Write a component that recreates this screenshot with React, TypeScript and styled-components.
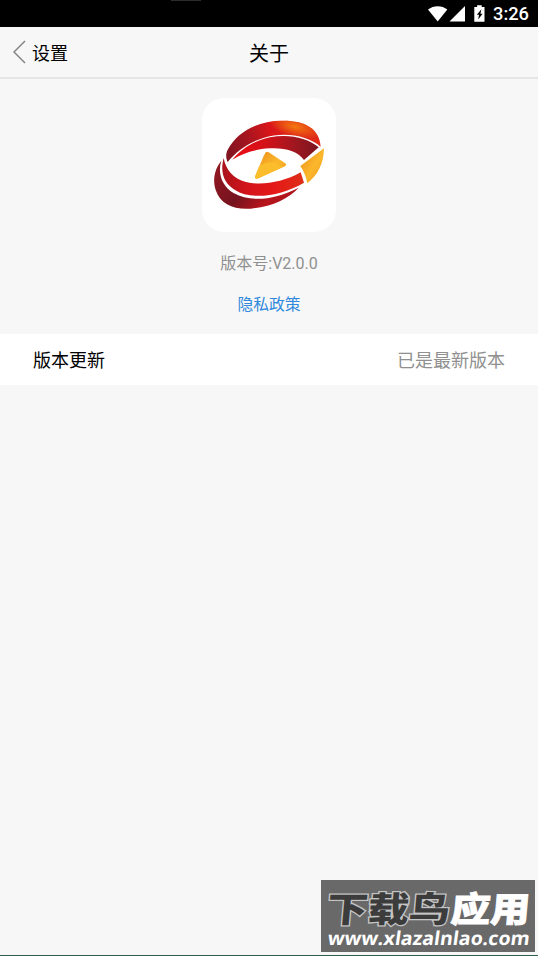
import React from 'react';
import styled, { createGlobalStyle } from 'styled-components';

function StatusIcons() {
  return (
    <svg width="60" height="26" viewBox="0 0 60 26">
      <path d="M0 8.5C5.5 4 14 4 19.3 8.5L9.7 20.5Z" fill="#fff" />
      <path d="M21.5 20.5H37V5Z" fill="#fff" />
      <path d="M46.3 6h2.8V4.3h4.6V6h2.8v14.7H46.3Z" fill="#fff" />
      <path d="M53.4 8.3l-4.6 5.4h2.2l-.8 4.8 4.4-5.8h-2.2Z" fill="#000" />
    </svg>
  );
}

function Logo() {
  return (
    <svg width="134" height="134" viewBox="21 18 402 402">
      <defs>
        <linearGradient id="top" x1="90" y1="190" x2="380" y2="110" gradientUnits="userSpaceOnUse">
          <stop offset="0" stopColor="#7d1420" />
          <stop offset="0.25" stopColor="#a31520" />
          <stop offset="0.5" stopColor="#d91519" />
          <stop offset="1" stopColor="#e0301a" />
        </linearGradient>
        <radialGradient
          id="glow"
          cx="0"
          cy="0"
          r="1"
          gradientUnits="userSpaceOnUse"
          gradientTransform="translate(300 104) rotate(14) scale(80 32)"
        >
          <stop offset="0" stopColor="#f4780f" />
          <stop offset="1" stopColor="#f4780f" stopOpacity="0" />
        </radialGradient>
        <linearGradient id="inner" x1="150" y1="0" x2="370" y2="0" gradientUnits="userSpaceOnUse">
          <stop offset="0" stopColor="#e30e16" />
          <stop offset="0.3" stopColor="#d21118" />
          <stop offset="0.7" stopColor="#9d1720" />
          <stop offset="1" stopColor="#7c1520" />
        </linearGradient>
        <linearGradient id="front" x1="80" y1="0" x2="330" y2="0" gradientUnits="userSpaceOnUse">
          <stop offset="0" stopColor="#a9131c" />
          <stop offset="0.3" stopColor="#d3131a" />
          <stop offset="0.65" stopColor="#e51a18" />
          <stop offset="1" stopColor="#dd3018" />
        </linearGradient>
        <linearGradient id="bottom" x1="80" y1="220" x2="250" y2="350" gradientUnits="userSpaceOnUse">
          <stop offset="0" stopColor="#8e1821" />
          <stop offset="0.45" stopColor="#75131e" />
          <stop offset="0.8" stopColor="#b8141c" />
          <stop offset="1" stopColor="#b0141c" />
        </linearGradient>
        <linearGradient id="gold" x1="0" y1="0" x2="1" y2="1">
          <stop offset="0" stopColor="#ee8c1a" />
          <stop offset="0.55" stopColor="#fbb82c" />
          <stop offset="1" stopColor="#f0961c" />
        </linearGradient>
      </defs>
      <path
        d="M98 210C92 196 92 184 99 172C125 121 189 86 259 86C329 84 374 109 377 164C340 132 270 117 205 138C157 153 124 179 98 210Z"
        fill="url(#top)"
      />
      <path
        d="M98 210C92 196 92 184 99 172C125 121 189 86 259 86C329 84 374 109 377 164C340 132 270 117 205 138C157 153 124 179 98 210Z"
        fill="url(#glow)"
      />
      <path
        d="M112 203C145 164 184 145 225 136C283 125 337 138 371 166L327 204C306 176 270 167 225 169C181 172 146 182 112 203Z"
        fill="url(#inner)"
      />
      <path
        d="M79 206C59 230 52 264 62 294C76 337 117 354 168 350C227 345 282 320 311 287C240 324 165 331 117 304C81 284 67 244 79 206Z"
        fill="url(#bottom)"
      />
      <path
        d="M86 198C74 243 88 274 120 294C168 325 258 313 327 272L317 241C263 272 198 281 153 270C114 260 92 232 86 198Z"
        fill="url(#front)"
      />
      <path d="M387 169L316 222C326 237 333 253 337 274C368 249 386 216 387 169Z" fill="url(#gold)" />
      <path
        d="M212 181Q216 178 221 181L271 214Q276 218 270 223L187 260Q178 261 181 251L205 194Z"
        fill="url(#gold)"
      />
      <path d="M193 222C221 203 242 210 263 225L187 260Q178 261 181 251Z" fill="#fbbd2b" />
    </svg>
  );
}

function App() {
  return (
    <>
      <GlobalStyle />
      <Page>
        <StatusBar>
          <StatusIcons />
          <Clock>3:26</Clock>
        </StatusBar>
        <Header>
          <Back>
            <svg width="13" height="24" viewBox="0 0 13 24">
              <path d="M12 1L1 12L12 23" fill="none" stroke="#858585" strokeWidth="1.5" />
            </svg>
            <span>设置</span>
          </Back>
          <Title>关于</Title>
        </Header>
        <About>
          <LogoCard>
            <Logo />
          </LogoCard>
          <Version>版本号:V2.0.0</Version>
          <Policy>隐私政策</Policy>
        </About>
        <Row>
          <span>版本更新</span>
          <RowValue>已是最新版本</RowValue>
        </Row>
        <Watermark>
          <svg width="214" height="72" viewBox="0 0 214 72">
            <g transform="translate(5 42) skewX(-5)">
              <MarkName textLength="123" lengthAdjust="spacingAndGlyphs" $dark>
                下载鸟
              </MarkName>
              <MarkName x="124" textLength="79" lengthAdjust="spacingAndGlyphs">
                应用
              </MarkName>
            </g>
            <g transform="translate(6 65) skewX(-8)">
              <MarkUrl textLength="202" lengthAdjust="spacingAndGlyphs">
                www.xlazalnlao.com
              </MarkUrl>
            </g>
          </svg>
        </Watermark>
      </Page>
    </>
  );
}

export default App;

const GlobalStyle = createGlobalStyle`
  body {
    margin: 0;
    background: #f7f7f7;
  }
`;

const Page = styled.div`
  position: relative;
  box-sizing: border-box;
  width: 538px;
  height: 956px;
  overflow: hidden;
  background: #f7f7f7;
  border-bottom: 1px solid #2f5f4c;
  font-family: Roboto, 'Noto Sans CJK SC', sans-serif;
  color: #000;
`;

const StatusBar = styled.div`
  display: flex;
  align-items: center;
  justify-content: flex-end;
  height: 27px;
  box-sizing: border-box;
  padding-right: 9px;
  background: linear-gradient(#2c2c2c, #2c2c2c) 171px 0 / 30px 1px no-repeat #000;
`;

const Clock = styled.span`
  margin-left: 5px;
  font-size: 18.3px;
  font-weight: 500;
  line-height: 27px;
  color: #fff;
`;

const Header = styled.div`
  display: grid;
  grid-template-columns: 1fr auto 1fr;
  align-items: center;
  height: 52px;
  box-sizing: border-box;
  border-bottom: 2px solid #e6e6e6;
`;

const Back = styled.div`
  display: flex;
  align-items: center;
  gap: 6px;
  padding-left: 13px;
  font-size: 18px;
  line-height: 26px;

  span {
    padding-top: 3px;
  }
`;

const Title = styled.div`
  padding-top: 3px;
  font-size: 20px;
  line-height: 28px;
`;

const About = styled.div`
  display: flex;
  flex-direction: column;
  align-items: center;
  height: 255px;
  box-sizing: border-box;
  padding-top: 19px;
`;

const LogoCard = styled.div`
  width: 134px;
  height: 134px;
  border-radius: 22px;
  background: #fff;
  overflow: hidden;

  svg {
    display: block;
  }
`;

const Version = styled.div`
  margin-top: 20px;
  font-size: 16px;
  line-height: 24px;
  color: #909090;
`;

const Policy = styled.div`
  margin-top: 17px;
  font-size: 15.8px;
  line-height: 24px;
  color: #3089dc;
`;

const Row = styled.div`
  display: flex;
  align-items: center;
  justify-content: space-between;
  height: 51px;
  box-sizing: border-box;
  padding: 0 33px 2px;
  background: #fff;
  font-size: 18px;
`;

const RowValue = styled.span`
  color: #909090;
`;

const Watermark = styled.div`
  position: absolute;
  right: 3px;
  bottom: 3px;
  width: 214px;
  height: 72px;
  background: #696969;

  svg {
    display: block;
  }
`;

const MarkName = styled.text<{ $dark?: boolean }>`
  font-family: 'Noto Sans CJK SC', sans-serif;
  font-size: 35px;
  font-weight: 900;
  fill: ${p => (p.$dark ? '#3c3c3c' : '#fff')};
  stroke: ${p => (p.$dark ? '#c4c4c4' : '#fff')};
  stroke-width: ${p => (p.$dark ? '2.5px' : '0.8px')};
  paint-order: stroke;
`;

const MarkUrl = styled.text`
  font-family: 'Open Sans', 'Noto Sans', sans-serif;
  font-size: 19px;
  font-weight: 700;
  fill: #fff;
`;
